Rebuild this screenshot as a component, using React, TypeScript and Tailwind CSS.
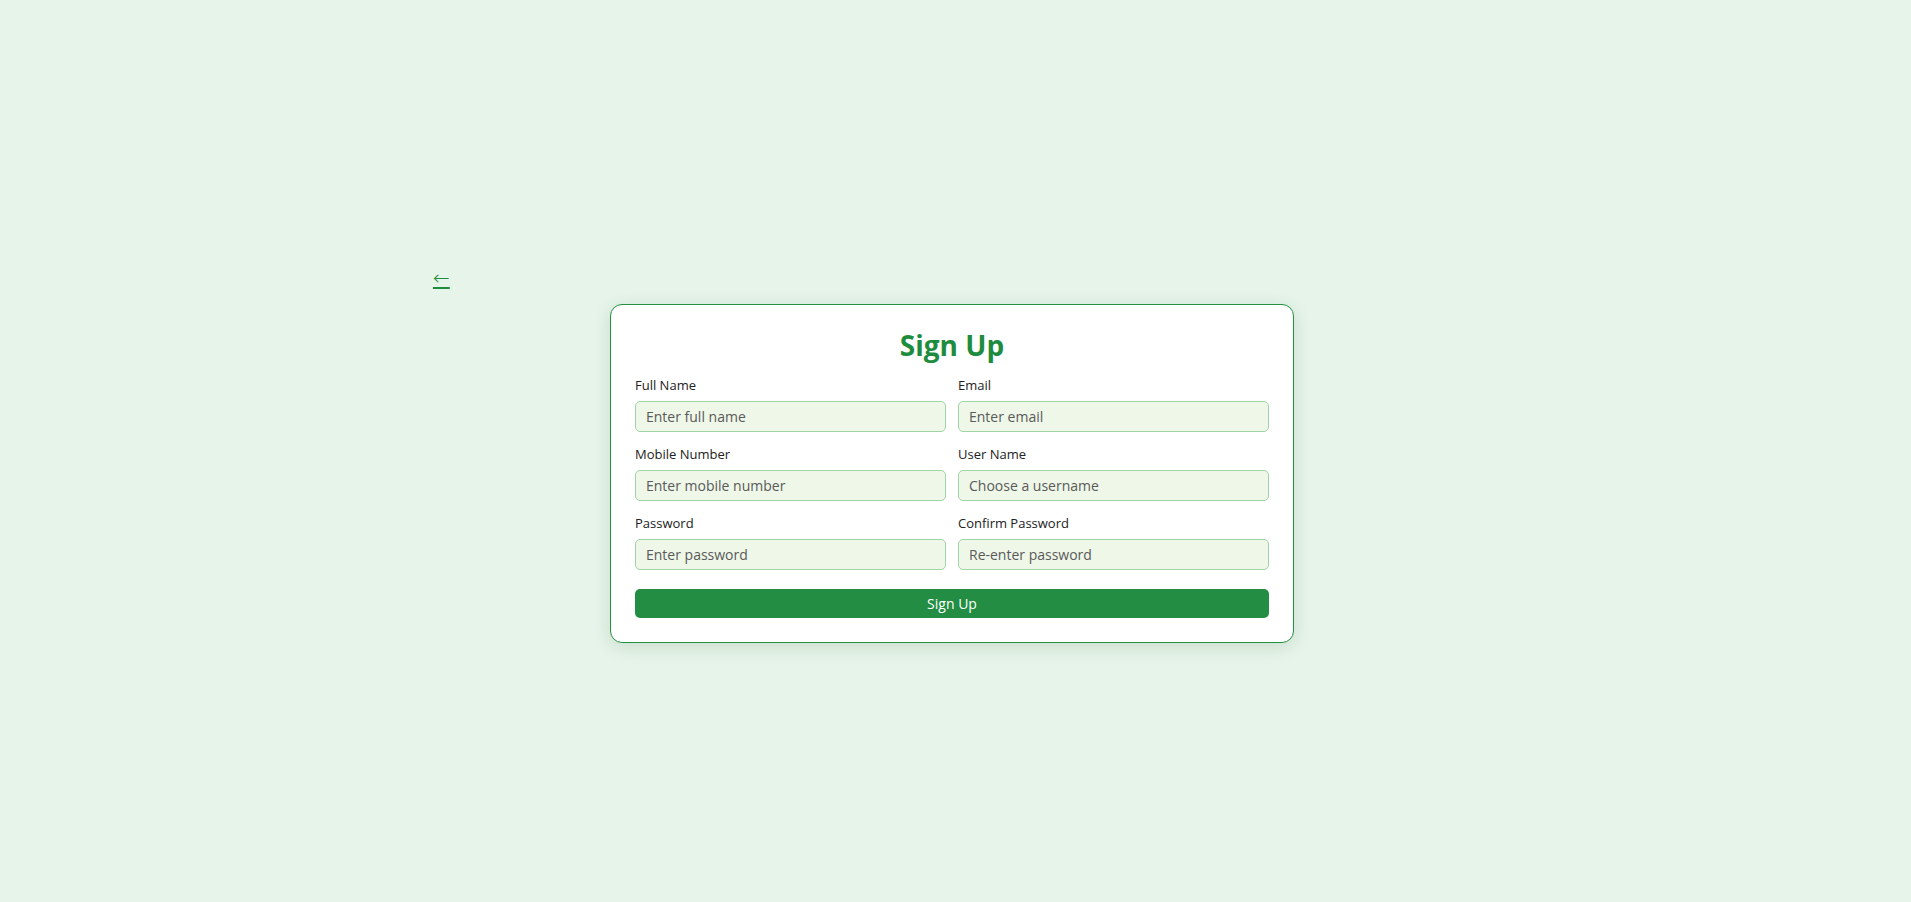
const fields = [
  { label: 'Full Name', placeholder: 'Enter full name', type: 'text' },
  { label: 'Email', placeholder: 'Enter email', type: 'email' },
  { label: 'Mobile Number', placeholder: 'Enter mobile number', type: 'tel' },
  { label: 'User Name', placeholder: 'Choose a username', type: 'text' },
  { label: 'Password', placeholder: 'Enter password', type: 'password' },
  { label: 'Confirm Password', placeholder: 'Re-enter password', type: 'password' },
];

export default function App() {
  return (
    <div className="min-h-screen bg-[#e6f4e9] font-['Segoe_UI','Open_Sans',sans-serif]">
      <div className="ml-[433px] pt-[266px] w-[900px]">
        {/* Back link */}
        <a
          href="#"
          className="block w-fit font-['DejaVu_Sans',sans-serif] text-[20px] font-light leading-[24px] text-[#1f8b3d] underline underline-offset-[2px]"
        >
          ←
        </a>

        <div className="ml-[177px] mt-[14px] w-[684px] rounded-[12px] border border-[#23913f] bg-white px-[24px] pt-[24px] pb-[24px] shadow-[0_4px_18px_rgba(0,60,20,0.12)]">
          <h2 className="mb-[15px] text-center text-[28px] font-bold leading-[32px] text-[#1e8c3e]">Sign Up</h2>

          <form className="grid grid-cols-2 gap-x-[12px] gap-y-[13px]" onSubmit={(e) => e.preventDefault()}>
            {fields.map((f) => (
              <div key={f.label}>
                <label className="mb-[7px] block text-[13px] leading-[18px] text-[#222]">{f.label}</label>
                <input
                  type={f.type}
                  placeholder={f.placeholder}
                  className="h-[31px] w-full rounded-[5px] border border-[#9fd5a6] bg-[#eef7e8] px-[10px] text-[14px] text-[#222] outline-none placeholder:text-[#5a5a5a]"
                />
              </div>
            ))}
            <button
              type="submit"
              className="col-span-2 mt-[6px] h-[29px] w-full rounded-[5px] bg-[#228d43] text-[14px] text-white"
            >
              Sign Up
            </button>
          </form>
        </div>
      </div>
    </div>
  );
}
